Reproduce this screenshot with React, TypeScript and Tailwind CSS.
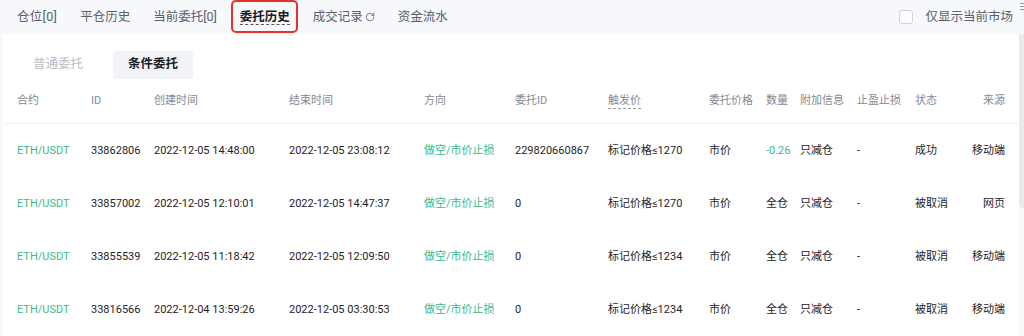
import { RotateCw } from "lucide-react";

interface OrderRow {
  symbol: string;
  id: string;
  created: string;
  ended: string;
  side: string;
  orderId: string;
  trigger: string;
  price: string;
  amount: string;
  extra: string;
  tpsl: string;
  status: string;
  source: string;
}

const rows: OrderRow[] = [
  {
    symbol: "ETH/USDT",
    id: "33862806",
    created: "2022-12-05 14:48:00",
    ended: "2022-12-05 23:08:12",
    side: "做空/市价止损",
    orderId: "229820660867",
    trigger: "标记价格≤1270",
    price: "市价",
    amount: "-0.26",
    extra: "只减仓",
    tpsl: "-",
    status: "成功",
    source: "移动端",
  },
  {
    symbol: "ETH/USDT",
    id: "33857002",
    created: "2022-12-05 12:10:01",
    ended: "2022-12-05 14:47:37",
    side: "做空/市价止损",
    orderId: "0",
    trigger: "标记价格≤1270",
    price: "市价",
    amount: "全仓",
    extra: "只减仓",
    tpsl: "-",
    status: "被取消",
    source: "网页",
  },
  {
    symbol: "ETH/USDT",
    id: "33855539",
    created: "2022-12-05 11:18:42",
    ended: "2022-12-05 12:09:50",
    side: "做空/市价止损",
    orderId: "0",
    trigger: "标记价格≤1234",
    price: "市价",
    amount: "全仓",
    extra: "只减仓",
    tpsl: "-",
    status: "被取消",
    source: "移动端",
  },
  {
    symbol: "ETH/USDT",
    id: "33816566",
    created: "2022-12-04 13:59:26",
    ended: "2022-12-05 03:30:53",
    side: "做空/市价止损",
    orderId: "0",
    trigger: "标记价格≤1234",
    price: "市价",
    amount: "全仓",
    extra: "只减仓",
    tpsl: "-",
    status: "被取消",
    source: "移动端",
  },
];

const cols =
  "grid grid-cols-[74px_63px_135px_135px_91px_93px_101px_57px_34px_57px_58px_44px_1fr] items-center pl-[14px] pr-[14px]";

export default function App() {
  return (
    <div
      className="relative w-[1024px] h-[336px] overflow-hidden bg-[#f6f8fc]"
      style={{ fontFamily: 'Roboto, "Noto Sans CJK SC", sans-serif' }}
    >
      {/* top tabs */}
      <div className="flex items-center h-[34px] pl-[17px] pr-[11px] text-[12.5px] text-[#5b5f68]">
        <div className="flex items-center gap-[23px]">
          <span className="tracking-[0.3px]">仓位[0]</span>
          <span>平仓历史</span>
          <span>当前委托[0]</span>
          <span className="relative font-semibold text-[#1b1c1f]">
            <span className="border-b border-dashed border-[#555]">委托历史</span>
            <span className="absolute -left-[9px] -right-[8px] -top-[8px] -bottom-[7px] border-2 border-[#e5322b] rounded-[5px]" />
          </span>
          <span className="flex items-center gap-[2px]">
            成交记录
            <RotateCw size={10} strokeWidth={2.2} className="text-[#6b6f78]" />
          </span>
          <span>资金流水</span>
        </div>
        <div className="ml-auto flex items-center gap-[12px]">
          <span className="w-[14px] h-[14px] rounded-[3px] border border-[#cfd3da] bg-white" />
          <span className="text-[#5b5f68]">仅显示当前市场</span>
        </div>
      </div>
      <div className="absolute right-0 top-[3px] flex flex-col gap-[2px]">
        <span className="w-[4px] h-px bg-[#999]" />
        <span className="w-[4px] h-px bg-[#999]" />
        <span className="w-[4px] h-px bg-[#999]" />
      </div>

      {/* content panel */}
      <div className="ml-[3px] mr-[5px] bg-white h-[302px]">
        <div className="flex items-center pt-[16px] pl-[14px] h-[45px]">
          <span className="px-[16px] h-[28px] flex items-center text-[12.5px] text-[#b9bdc5]">
            普通委托
          </span>
          <span className="ml-[14px] px-[15px] h-[28px] flex items-center rounded-[4px] bg-[#f2f3f6] text-[12.5px] font-semibold text-[#1b1c1f]">
            条件委托
          </span>
        </div>

        <div className={`${cols} h-[45px] border-b border-[#eff0f4] text-[11px] text-[#868a93]`}>
          <span>合约</span>
          <span>ID</span>
          <span>创建时间</span>
          <span>结束时间</span>
          <span>方向</span>
          <span>委托ID</span>
          <span>
            <span className="border-b border-dashed border-[#999] pb-[1px]">触发价</span>
          </span>
          <span>委托价格</span>
          <span>数量</span>
          <span>附加信息</span>
          <span>止盈止损</span>
          <span>状态</span>
          <span className="text-right">来源</span>
        </div>

        {rows.map((r, i) => (
          <div key={i} className={`${cols} h-[53px] pt-[2px] text-[11px] text-[#1f2228]`}>
            <span className="text-[#3db98a]">{r.symbol}</span>
            <span>{r.id}</span>
            <span>{r.created}</span>
            <span>{r.ended}</span>
            <span className="text-[#3db98a]">{r.side}</span>
            <span>{r.orderId}</span>
            <span>{r.trigger}</span>
            <span>{r.price}</span>
            <span className={r.amount.startsWith("-") ? "text-[#3db98a]" : ""}>
              {r.amount}
            </span>
            <span>{r.extra}</span>
            <span>{r.tpsl}</span>
            <span>{r.status}</span>
            <span className="text-right">{r.source}</span>
          </div>
        ))}
      </div>

      {/* scrollbar */}
      <div className="absolute right-0 top-[34px] w-[5px] h-[174px] rounded-bl-[4px] bg-[#e8eaee]" />
    </div>
  );
}
